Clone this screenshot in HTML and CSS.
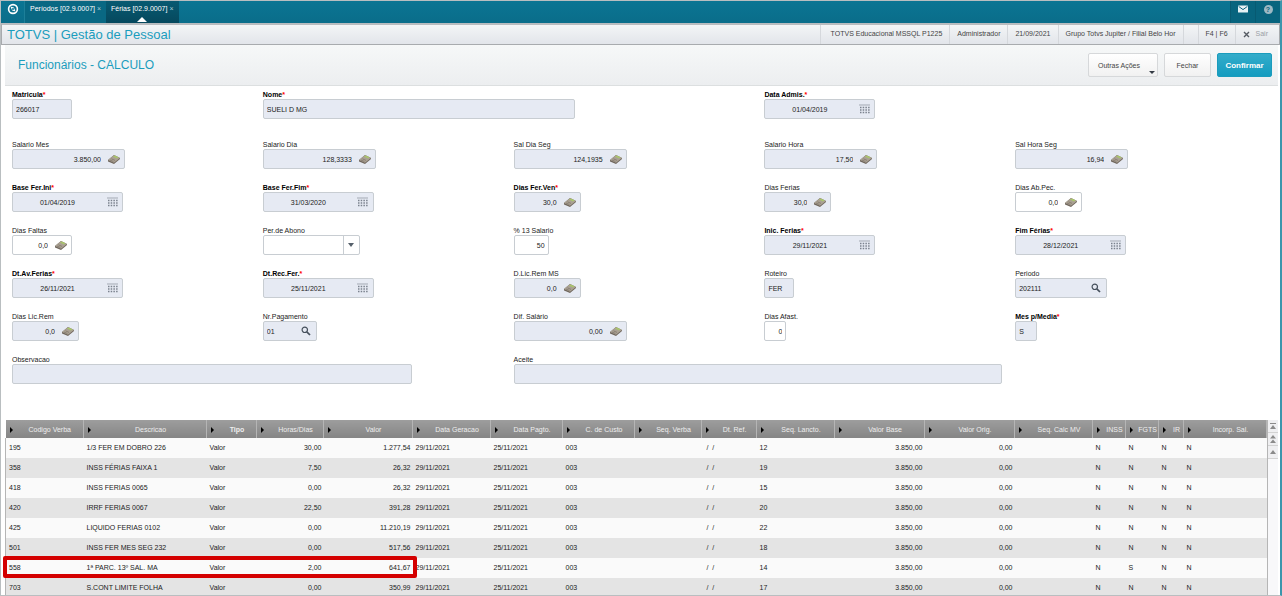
FILE: index.html
```
<!DOCTYPE html>
<html lang="pt-BR">
<head>
  <meta charset="utf-8">
  <title>TOTVS | Gestão de Pessoal</title>
  <link rel="stylesheet" href="styles.css">
</head>
<body>
  <!-- Shared icons -->
  <svg class="sprite" aria-hidden="true">
    <symbol id="calc" viewBox="0 0 12 10">
      <path d="M0 6 L6 1 L12 4 L12 5 L6 10 L0 7.5 Z" fill="#6f665c"/>
      <path d="M0 6 L6 1 L12 4 L6 8.8 Z" fill="#aaa193"/>
      <path d="M5 2.6 L6.6 1.4 L10.6 3.3 L9 4.6 Z" fill="#a9c66b"/>
      <path d="M2 6 L5.4 7.5 M3.4 4.8 L7 6.4" stroke="#7a7064" stroke-width=".7"/>
    </symbol>
    <symbol id="cal" viewBox="0 0 11 10">
      <path d="M0 1 H11" stroke="#a3a9b3" stroke-width="1"/>
      <path d="M1 3.5 H11 M1 6 H11 M1 8.5 H11" stroke="#7b828e" stroke-width="1.5" stroke-dasharray="1.5 1.2"/>
    </symbol>
    <symbol id="lens" viewBox="0 0 10 10">
      <circle cx="3.8" cy="3.8" r="2.7" fill="none" stroke="#46505c" stroke-width="1.2"/>
      <path d="M5.8 5.8 L9 9" stroke="#46505c" stroke-width="1.7"/>
    </symbol>
  </svg>

  <div class="page">
    <header class="topbar">
      <div class="logo">
        <svg width="12" height="12" viewBox="0 0 12 12"><circle cx="6" cy="6" r="4.4" fill="none" stroke="#fff" stroke-width="1.6"/><path d="M3.4 3.6 L6.8 4.6 L8.6 8.4 L5.2 7.4 Z" fill="#fff"/><circle cx="6" cy="6" r="1" fill="#0a7290"/></svg>
      </div>
      <nav class="tabs">
        <a class="tab" href="#">Períodos [02.9.0007] <span class="close">×</span></a>
        <a class="tab active" href="#">Férias [02.9.0007] <span class="close">×</span></a>
      </nav>
      <div class="tools">
        <button type="button" aria-label="Mensagens"><svg width="10" height="8" viewBox="0 0 10 8"><rect width="10" height="7" y=".5" rx=".6" fill="#e6f1f4"/><path d="M.6 1.4 L5 4.6 L9.4 1.4" fill="none" stroke="#0a6480"/></svg></button>
        <button type="button" aria-label="Ajuda"><span class="help">?</span></button>
      </div>
    </header>

    <div class="product">
      <h1>TOTVS | Gestão de Pessoal</h1>
      <ul class="info">
        <li class="env">TOTVS Educacional MSSQL P1225</li>
        <li>Administrador</li>
        <li>21/09/2021</li>
        <li>Grupo Totvs Jupiter / Filial Belo Hor</li>
        <li></li>
        <li>F4 | F6</li>
        <li><a class="exit" href="#"><svg width="7" height="7" viewBox="0 0 7 7"><path d="M1 1 L6 6 M6 1 L1 6" stroke="#555b63" stroke-width="1.4"/></svg>Sair</a></li>
      </ul>
    </div>

    <div class="titlebar">
      <h2>Funcionários - CALCULO</h2>
      <div class="actions">
        <button type="button" class="btn more">Outras Ações</button>
        <button type="button" class="btn">Fechar</button>
        <button type="button" class="btn primary">Confirmar</button>
      </div>
    </div>

    <form class="form">
      <div class="grid first">
        <div class="field"><label class="req" for="matricula">Matricula</label><div class="control w60"><input id="matricula" value="266017" readonly></div></div>
        <div class="field span2"><label class="req" for="nome">Nome</label><div class="control w312"><input id="nome" value="SUELI D MG" readonly></div></div>
        <div class="field"><label class="req" for="admis">Data Admis.</label><div class="control date"><input id="admis" value="01/04/2019" readonly><button type="button" aria-label="Calendário"><svg width="11" height="10"><use href="#cal"/></svg></button></div></div>
      </div>

      <div class="grid">
        <div class="field"><label for="salmes">Salario Mes</label><div class="control num w113"><input id="salmes" value="3.850,00" readonly><button type="button" aria-label="Calculadora"><svg width="12" height="10"><use href="#calc"/></svg></button></div></div>
        <div class="field"><label for="saldia">Salario Dia</label><div class="control num w113"><input id="saldia" value="128,3333" readonly><button type="button" aria-label="Calculadora"><svg width="12" height="10"><use href="#calc"/></svg></button></div></div>
        <div class="field"><label for="saldiaseg">Sal Dia Seg</label><div class="control num w113"><input id="saldiaseg" value="124,1935" readonly><button type="button" aria-label="Calculadora"><svg width="12" height="10"><use href="#calc"/></svg></button></div></div>
        <div class="field"><label for="salhora">Salario Hora</label><div class="control num w113"><input id="salhora" value="17,50" readonly><button type="button" aria-label="Calculadora"><svg width="12" height="10"><use href="#calc"/></svg></button></div></div>
        <div class="field"><label for="salhoraseg">Sal Hora Seg</label><div class="control num w113"><input id="salhoraseg" value="16,94" readonly><button type="button" aria-label="Calculadora"><svg width="12" height="10"><use href="#calc"/></svg></button></div></div>

        <div class="field"><label class="req" for="baseini">Base Fer.Ini</label><div class="control date"><input id="baseini" value="01/04/2019" readonly><button type="button" aria-label="Calendário"><svg width="11" height="10"><use href="#cal"/></svg></button></div></div>
        <div class="field"><label class="req" for="basefim">Base Fer.Fim</label><div class="control date"><input id="basefim" value="31/03/2020" readonly><button type="button" aria-label="Calendário"><svg width="11" height="10"><use href="#cal"/></svg></button></div></div>
        <div class="field"><label class="req" for="diasven">Dias Fer.Ven</label><div class="control num w67"><input id="diasven" value="30,0" readonly><button type="button" aria-label="Calculadora"><svg width="12" height="10"><use href="#calc"/></svg></button></div></div>
        <div class="field"><label for="diasfer">Dias Ferias</label><div class="control num w67"><input id="diasfer" value="30,0" readonly><button type="button" aria-label="Calculadora"><svg width="12" height="10"><use href="#calc"/></svg></button></div></div>
        <div class="field"><label for="abpec">Dias Ab.Pec.</label><div class="control num w67 edit"><input id="abpec" value="0,0"><button type="button" aria-label="Calculadora"><svg width="12" height="10"><use href="#calc"/></svg></button></div></div>

        <div class="field"><label for="faltas">Dias Faltas</label><div class="control num w60 edit"><input id="faltas" value="0,0"><button type="button" aria-label="Calculadora"><svg width="12" height="10"><use href="#calc"/></svg></button></div></div>
        <div class="field"><label for="abono">Per.de Abono</label><div class="control w97 edit"><select id="abono"><option></option></select><span class="drop"></span></div></div>
        <div class="field"><label for="decimo">% 13 Salario</label><div class="control num w35 edit"><input id="decimo" value="50"></div></div>
        <div class="field"><label class="req" for="inic">Inic. Ferias</label><div class="control date"><input id="inic" value="29/11/2021" readonly><button type="button" aria-label="Calendário"><svg width="11" height="10"><use href="#cal"/></svg></button></div></div>
        <div class="field"><label class="req" for="fim">Fim Férias</label><div class="control date"><input id="fim" value="28/12/2021" readonly><button type="button" aria-label="Calendário"><svg width="11" height="10"><use href="#cal"/></svg></button></div></div>

        <div class="field"><label class="req" for="dtav">Dt.Av.Ferias</label><div class="control date"><input id="dtav" value="26/11/2021" readonly><button type="button" aria-label="Calendário"><svg width="11" height="10"><use href="#cal"/></svg></button></div></div>
        <div class="field"><label class="req" for="dtrec">Dt.Rec.Fer.</label><div class="control date"><input id="dtrec" value="25/11/2021" readonly><button type="button" aria-label="Calendário"><svg width="11" height="10"><use href="#cal"/></svg></button></div></div>
        <div class="field"><label for="dlic">D.Lic.Rem MS</label><div class="control num w67"><input id="dlic" value="0,0" readonly><button type="button" aria-label="Calculadora"><svg width="12" height="10"><use href="#calc"/></svg></button></div></div>
        <div class="field"><label for="roteiro">Roteiro</label><div class="control w30"><input id="roteiro" value="FER" readonly></div></div>
        <div class="field"><label for="periodo">Periodo</label><div class="control w92"><input id="periodo" value="202111" readonly><button type="button" aria-label="Pesquisar"><svg width="10" height="10"><use href="#lens"/></svg></button></div></div>

        <div class="field"><label for="diaslic">Dias Lic.Rem</label><div class="control num w67"><input id="diaslic" value="0,0" readonly><button type="button" aria-label="Calculadora"><svg width="12" height="10"><use href="#calc"/></svg></button></div></div>
        <div class="field"><label for="nrpag">Nr.Pagamento</label><div class="control w54"><input id="nrpag" value="01" readonly><button type="button" aria-label="Pesquisar"><svg width="10" height="10"><use href="#lens"/></svg></button></div></div>
        <div class="field"><label for="difsal">Dif. Salário</label><div class="control num w113"><input id="difsal" value="0,00" readonly><button type="button" aria-label="Calculadora"><svg width="12" height="10"><use href="#calc"/></svg></button></div></div>
        <div class="field"><label for="afast">Dias Afast.</label><div class="control num w22 edit"><input id="afast" value="0"></div></div>
        <div class="field"><label class="req" for="media">Mes p/Media</label><div class="control w22"><input id="media" value="S" readonly></div></div>

        <div class="field span2"><label for="obs">Observacao</label><div class="control w400"><input id="obs" readonly></div></div>
        <div class="field span2"><label for="aceite">Aceite</label><div class="control w488"><input id="aceite" readonly></div></div>
      </div>
    </form>

    <div class="verbas">
      <table>
        <colgroup>
          <col class="c78"><col class="c123"><col class="c50"><col class="c67"><col class="c89"><col class="c78"><col class="c72"><col class="c72"><col class="c67"><col class="c55"><col class="c78"><col class="c90"><col class="c90"><col class="c78"><col class="c33"><col class="c33"><col class="c25"><col class="c83">
        </colgroup>
        <thead>
          <tr><th>Codigo Verba</th><th>Descricao</th><th class="strong">Tipo</th><th>Horas/Dias</th><th>Valor</th><th>Data Geracao</th><th>Data Pagto.</th><th>C. de Custo</th><th>Seq. Verba</th><th>Dt. Ref.</th><th>Seq. Lancto.</th><th>Valor Base</th><th>Valor Orig.</th><th>Seq. Calc MV</th><th>INSS</th><th>FGTS</th><th>IR</th><th>Incorp. Sal.</th></tr>
        </thead>
        <tbody>
          <tr><td>195</td><td>1/3 FER EM DOBRO 226</td><td>Valor</td><td class="r">30,00</td><td class="r">1.277,54</td><td>29/11/2021</td><td>25/11/2021</td><td>003</td><td></td><td>&nbsp;/&nbsp;&nbsp;/</td><td>12</td><td class="r">3.850,00</td><td class="r">0,00</td><td></td><td>N</td><td>N</td><td>N</td><td>N</td></tr>
          <tr><td>358</td><td>INSS FÉRIAS FAIXA 1</td><td>Valor</td><td class="r">7,50</td><td class="r">26,32</td><td>29/11/2021</td><td>25/11/2021</td><td>003</td><td></td><td>&nbsp;/&nbsp;&nbsp;/</td><td>19</td><td class="r">3.850,00</td><td class="r">0,00</td><td></td><td>N</td><td>N</td><td>N</td><td>N</td></tr>
          <tr><td>418</td><td>INSS FERIAS 0065</td><td>Valor</td><td class="r">0,00</td><td class="r">26,32</td><td>29/11/2021</td><td>25/11/2021</td><td>003</td><td></td><td>&nbsp;/&nbsp;&nbsp;/</td><td>15</td><td class="r">3.850,00</td><td class="r">0,00</td><td></td><td>N</td><td>N</td><td>N</td><td>N</td></tr>
          <tr><td>420</td><td>IRRF FERIAS 0067</td><td>Valor</td><td class="r">22,50</td><td class="r">391,28</td><td>29/11/2021</td><td>25/11/2021</td><td>003</td><td></td><td>&nbsp;/&nbsp;&nbsp;/</td><td>20</td><td class="r">3.850,00</td><td class="r">0,00</td><td></td><td>N</td><td>N</td><td>N</td><td>N</td></tr>
          <tr><td>425</td><td>LIQUIDO FERIAS 0102</td><td>Valor</td><td class="r">0,00</td><td class="r">11.210,19</td><td>29/11/2021</td><td>25/11/2021</td><td>003</td><td></td><td>&nbsp;/&nbsp;&nbsp;/</td><td>22</td><td class="r">3.850,00</td><td class="r">0,00</td><td></td><td>N</td><td>N</td><td>N</td><td>N</td></tr>
          <tr><td>501</td><td>INSS FER MES SEG 232</td><td>Valor</td><td class="r">0,00</td><td class="r">517,56</td><td>29/11/2021</td><td>25/11/2021</td><td>003</td><td></td><td>&nbsp;/&nbsp;&nbsp;/</td><td>18</td><td class="r">3.850,00</td><td class="r">0,00</td><td></td><td>N</td><td>N</td><td>N</td><td>N</td></tr>
          <tr class="marked"><td>558<span class="mark"></span></td><td>1ª PARC. 13º SAL. MA</td><td>Valor</td><td class="r">2,00</td><td class="r">641,67</td><td>29/11/2021</td><td>25/11/2021</td><td>003</td><td></td><td>&nbsp;/&nbsp;&nbsp;/</td><td>14</td><td class="r">3.850,00</td><td class="r">0,00</td><td></td><td>N</td><td>S</td><td>N</td><td>N</td></tr>
          <tr><td>703</td><td>S.CONT LIMITE FOLHA</td><td>Valor</td><td class="r">0,00</td><td class="r">350,99</td><td>29/11/2021</td><td>25/11/2021</td><td>003</td><td></td><td>&nbsp;/&nbsp;&nbsp;/</td><td>17</td><td class="r">3.850,00</td><td class="r">0,00</td><td></td><td>N</td><td>N</td><td>N</td><td>N</td></tr>
        </tbody>
      </table>
      <div class="scroll">
        <button type="button" aria-label="Primeiro"><svg width="6" height="7" viewBox="0 0 6 7"><path d="M0 .5 H6" stroke="#8a8a8a"/><path d="M3 2 L6 6 H0 Z" fill="#8a8a8a"/></svg></button>
        <button type="button" aria-label="Página acima"><svg width="6" height="8" viewBox="0 0 6 8"><path d="M3 0 L6 3.5 H0 Z M3 4.5 L6 8 H0 Z" fill="#8a8a8a"/></svg></button>
        <button type="button" aria-label="Acima"><svg width="6" height="4" viewBox="0 0 6 4"><path d="M3 0 L6 4 H0 Z" fill="#8a8a8a"/></svg></button>
      </div>
    </div>
  </div>
</body>
</html>
```
FILE: styles.css
```
* {
  box-sizing: border-box;
}

body {
  margin: 0;
  background: #fff;
  font-family: "Liberation Sans", Arial, sans-serif;
  font-size: 7px;
  color: #222;
}

button, input, select {
  font: inherit;
  color: inherit;
  margin: 0;
  padding: 0;
  border: 0;
  background: none;
}

a {
  color: inherit;
  text-decoration: none;
}

.sprite {
  display: none;
}

.page {
  display: flex;
  flex-direction: column;
  height: 100vh;
  overflow: hidden;
  border: 1px solid #b9bec0;
  border-right: 2px solid #3b96ac;
}

/* top bar */
.topbar {
  display: flex;
  flex: none;
  height: 22px;
  background: linear-gradient(#0b7593, #0a6d8a);
  color: #fff;
}

.logo {
  width: 24px;
  padding: 2px 0 0 6px;
  border-right: 1px solid #1d7f99;
}

.tabs {
  display: flex;
}

.tab {
  position: relative;
  padding: 0 5px;
  line-height: 16px;
  background: #096883;
  white-space: nowrap;
}

.tab.active {
  background: linear-gradient(#075a72, #06485d);
}

.tab.active::after {
  content: "";
  position: absolute;
  left: 50%;
  bottom: 1px;
  margin-left: -5px;
  border: 5px solid transparent;
  border-top: 0;
  border-bottom-color: #fff;
}

.close {
  color: #a9cdd8;
}

.tools {
  display: flex;
  margin-left: auto;
}

.tools button {
  width: 25px;
  padding-bottom: 5px;
  border-left: 1px solid #075a72;
  background: #08647e;
}

.help {
  display: inline-block;
  width: 9px;
  border-radius: 50%;
  background: #9db9c4;
  color: #08647e;
  font-weight: bold;
  line-height: 9px;
}

/* product bar */
.product {
  display: flex;
  flex: none;
  align-items: center;
  justify-content: space-between;
  height: 22px;
  padding-left: 5px;
  border: 1px solid #a8abae;
  border-top: 2px solid #b9bcbf;
  background: linear-gradient(#f3f5f6, #e2e5ea);
}

h1, h2 {
  margin: 0;
  font-weight: normal;
  color: #1a9dbd;
}

h1 {
  font-size: 13px;
}

h2 {
  font-size: 12px;
}

.info {
  display: flex;
  align-self: stretch;
  margin: 0;
  padding: 0;
  list-style: none;
  line-height: 18px;
  color: #444;
}

.info li {
  padding: 0 7px;
  border-left: 1px solid #d5d8dc;
}

.info .env {
  padding-left: 10px;
}

.exit {
  display: flex;
  gap: 6px;
  align-items: center;
  padding-right: 4px;
  color: #9a9ea5;
}

/* title bar */
.titlebar {
  display: flex;
  flex: none;
  align-items: center;
  justify-content: space-between;
  height: 41px;
  margin: 0 2px 0 4px;
  padding: 0 6px 0 13px;
  border-bottom: 1px solid #dcdfe0;
  background: linear-gradient(#f6f8f8, #eceef0);
}

.actions {
  display: flex;
  gap: 6px;
}

.btn {
  height: 24px;
  min-width: 47px;
  border: 1px solid #d6d8da;
  border-radius: 2px;
  background: linear-gradient(#fff, #f1f1f1);
  color: #444;
}

.more {
  position: relative;
  width: 70px;
  padding-right: 8px;
}

.more::after {
  content: "";
  position: absolute;
  right: 2px;
  bottom: 2px;
  border: 3px solid transparent;
  border-bottom: 0;
  border-top-color: #333a44;
}

.primary {
  width: 55px;
  border-color: #1a9cbd;
  background: linear-gradient(#33acca, #149cc0);
  color: #fff;
  font-size: 8px;
  font-weight: bold;
}

/* form */
.form {
  flex: none;
  padding: 4px 14px 36px 11px;
}

.grid {
  display: grid;
  grid-template-columns: repeat(5, minmax(0, 1fr));
  row-gap: 14px;
}

.first {
  margin-bottom: 21px;
}

.span2 {
  grid-column: span 2;
}

.field label {
  display: block;
  line-height: 9px;
}

.field .req {
  font-weight: bold;
  color: #000;
}

.req::after {
  content: "*";
  color: #f00;
}

.control {
  display: flex;
  height: 20px;
  max-width: 100%;
  border: 1px solid #c8cdd2;
  border-radius: 2px;
  background: #e6eaf3;
}

.edit {
  background: #fff;
}

.control input,
.control select {
  flex: 1;
  width: 0;
  min-width: 0;
  padding: 0 3px;
  appearance: none;
  outline: 0;
}

.control button {
  display: flex;
  flex: none;
  align-items: center;
  justify-content: center;
  width: 20px;
}

.num input {
  text-align: right;
}

.date {
  width: 111px;
}

.date input {
  text-align: center;
}

.drop {
  display: flex;
  align-items: center;
  justify-content: center;
  width: 16px;
  border-left: 1px solid #c8cdd2;
}

.drop::after {
  content: "";
  border: 3px solid transparent;
  border-top: 4px solid #56606b;
  border-bottom: 0;
}

.w22 { width: 22px; }
.w30 { width: 30px; }
.w35 { width: 35px; }
.w54 { width: 54px; }
.w60 { width: 60px; }
.w67 { width: 67px; }
.w92 { width: 92px; }
.w97 { width: 97px; }
.w113 { width: 113px; }
.w312 { width: 312px; }
.w400 { width: 400px; }
.w488 { width: 488px; }

/* table */
.verbas {
  display: flex;
  flex: 1;
  align-items: flex-start;
  min-height: 0;
  margin: 0 2px 0 4px;
}

table {
  flex: 1;
  width: 0;
  table-layout: fixed;
  border-collapse: collapse;
}

th {
  position: relative;
  height: 18px;
  padding: 0 0 0 11px;
  border-right: 1px solid #b5b5b5;
  background: linear-gradient(#9d9d9d, #858585);
  color: #eee;
  font-weight: normal;
  white-space: nowrap;
}

th.strong {
  font-weight: bold;
}

th::before {
  content: "";
  position: absolute;
  left: 4px;
  top: 7px;
  border: 3px solid transparent;
  border-left-color: #000;
  border-right: 0;
}

td {
  height: 20px;
  padding: 0 3px 1px;
  white-space: nowrap;
}

tbody tr {
  background: #fafafa;
}

tbody tr:nth-child(even) {
  background: #e4e4e4;
}

td:first-child {
  border-left: 1px solid #b5b5b5;
}

.r {
  padding-right: 2px;
  text-align: right;
}

.marked {
  position: relative;
}

.mark {
  position: absolute;
  left: -3px;
  top: -2px;
  width: calc(33% - 2px);
  height: 22px;
  border: 4px solid #d40000;
  border-radius: 2px;
}

.c25 { width: 25px; }
.c33 { width: 33px; }
.c50 { width: 50px; }
.c55 { width: 55px; }
.c67 { width: 67px; }
.c72 { width: 72px; }
.c78 { width: 78px; }
.c83 { width: 83px; }
.c89 { width: 89px; }
.c90 { width: 90px; }
.c123 { width: 123px; }

.scroll {
  display: flex;
  flex-direction: column;
  align-self: stretch;
  width: 14px;
  border-left: 1px solid #b5b5b5;
  background: #f8f8fa;
}

.scroll button {
  display: flex;
  align-items: center;
  justify-content: center;
  height: 13px;
  border-bottom: 1px solid #d2d2d2;
  background: #efeff1;
}
```
